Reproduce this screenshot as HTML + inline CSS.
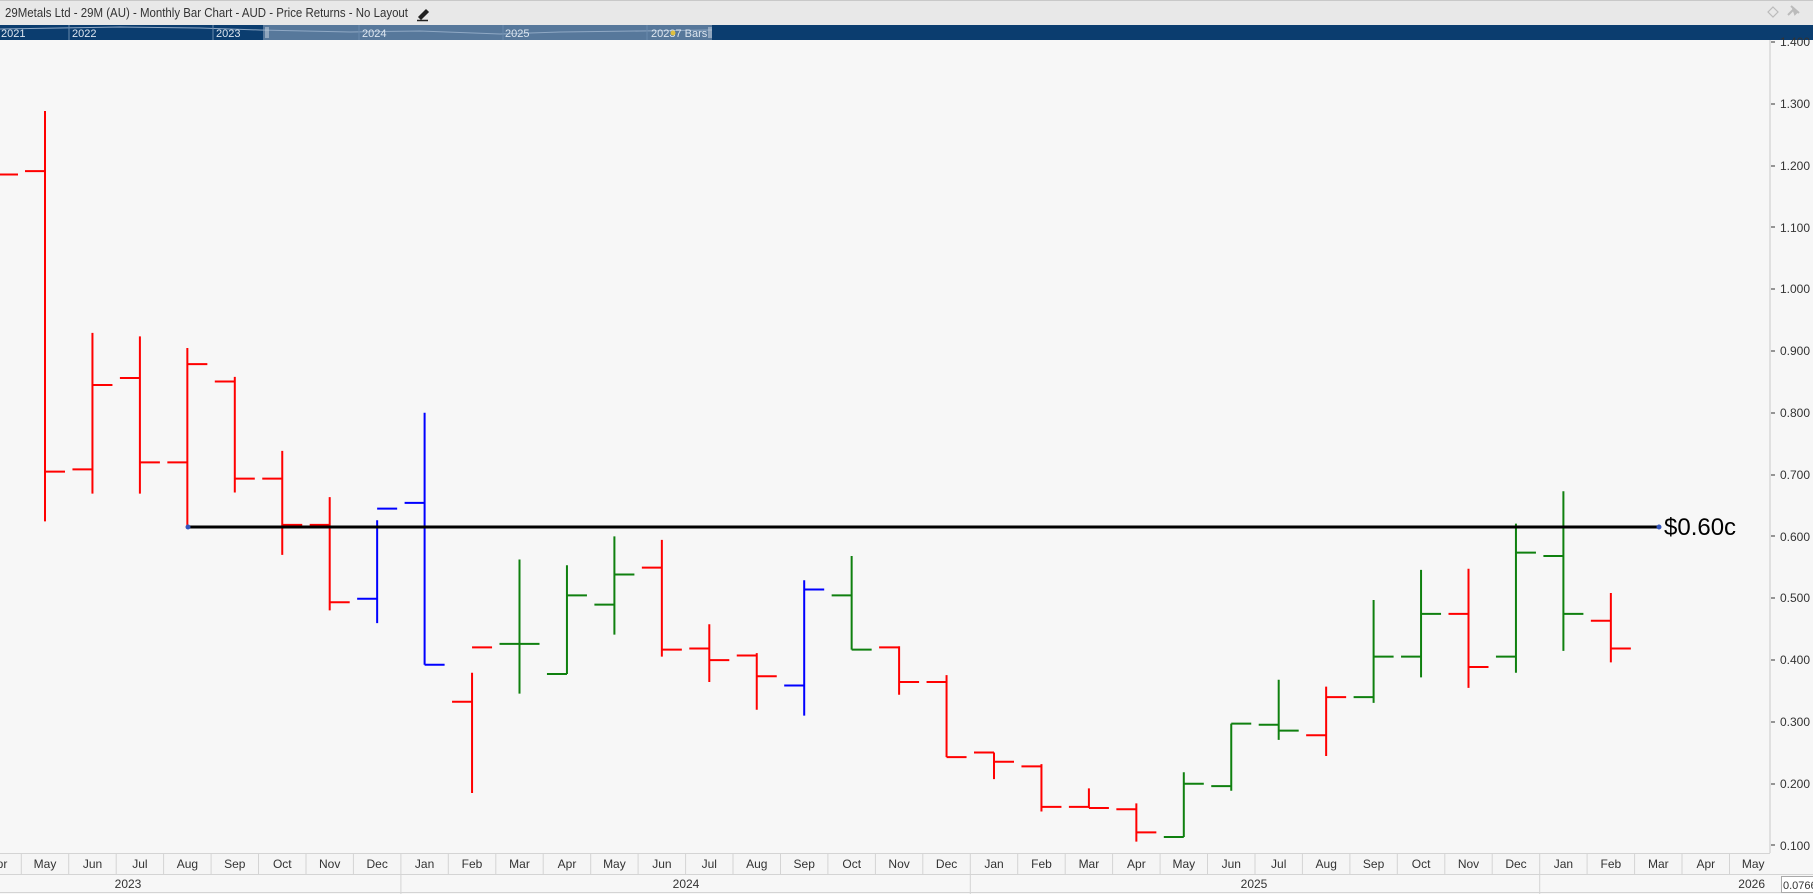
<!DOCTYPE html>
<html><head><meta charset="utf-8"><style>
html,body{margin:0;padding:0;width:1813px;height:894px;overflow:hidden;background:#f7f7f7;font-family:"Liberation Sans",sans-serif}
</style></head><body>
<svg width="1813" height="894" xmlns="http://www.w3.org/2000/svg" style="position:absolute;left:0;top:0;font-family:'Liberation Sans',sans-serif">
<rect x="0" y="0" width="1813" height="894" fill="#f7f7f7"/>
<!-- title bar -->
<rect x="0" y="0" width="1813" height="25" fill="#e8e8e8"/>
<rect x="0" y="0" width="1813" height="1" fill="#c8c8c8"/>
<text x="5" y="17" font-size="13" fill="#333" textLength="403" lengthAdjust="spacingAndGlyphs">29Metals Ltd - 29M (AU) - Monthly Bar Chart - AUD - Price Returns - No Layout</text>
<path d="M419 17 L426 10 L428 12 L421 19 Z M417 20.5 H428" stroke="#222" stroke-width="1.5" fill="#222"/>
<path d="M1773 7 L1778 12 L1773 17 L1768 12 Z" fill="none" stroke="#bbb" stroke-width="1.2"/>
<path d="M1788 15 L1793 10 M1791 6 L1799 13 M1793 8 L1797 12 L1795 14 Z" stroke="#bbb" stroke-width="2" fill="#bbb"/>
<!-- navigator -->
<rect x="0" y="25" width="1813" height="15" fill="#0b3d6f"/>
<rect x="263" y="25" width="449" height="15" fill="#57789b"/>
<path d="M0 29 L120 27 L200 28 L260 30 L350 32 L420 31 L500 34 L560 32 L640 31 L712 30" stroke="#8fa8c4" stroke-width="1" fill="none"/>
<g stroke="#6a8aac" stroke-width="1"><path d="M69 25V40M213 25V40M359 25V40M503 25V40M647 25V40"/></g>
<path d="M266 27V38M268 27V38M709 27V38M711 27V38" stroke="#c8d4e0" stroke-width="1"/>
<g font-size="11" fill="#dde6f0"><text x="1" y="37">2021</text><text x="72" y="37">2022</text><text x="216" y="37">2023</text><text x="362" y="37">2024</text><text x="505" y="37">2025</text><text x="651" y="37">20237 Bars</text></g>
<circle cx="673" cy="33" r="2.5" fill="#e0c040"/>
<!-- price axis -->
<path d="M1770 40V853" stroke="#c8c8c8"/>
<g font-size="12" fill="#333">
<text x="1780" y="46">1.400</text><text x="1780" y="108">1.300</text><text x="1780" y="170">1.200</text><text x="1780" y="232">1.100</text><text x="1780" y="293">1.000</text><text x="1780" y="355">0.900</text><text x="1780" y="417">0.800</text><text x="1780" y="479">0.700</text><text x="1780" y="541">0.600</text><text x="1780" y="602">0.500</text><text x="1780" y="664">0.400</text><text x="1780" y="726">0.300</text><text x="1780" y="788">0.200</text><text x="1780" y="850">0.100</text>
</g>
<g stroke="#333"><path d="M1771 42H1775M1771 104H1775M1771 166H1775M1771 227H1775M1771 289H1775M1771 351H1775M1771 413H1775M1771 475H1775M1771 536H1775M1771 598H1775M1771 660H1775M1771 722H1775M1771 784H1775M1771 845H1775"/></g>
<!-- time axis -->
<rect x="0" y="853" width="1770" height="21" fill="#f5f5f5"/>
<path d="M0 853.5H1770M0 874.5H1813M0 892.5H1813" stroke="#d4d4d4"/>
<g stroke="#d4d4d4"><path d="M21.3 853V874M68.7 853V874M116.2 853V874M163.6 853V874M211.1 853V874M258.5 853V874M306 853V874M353.4 853V874M400.9 853V894M448.3 853V874M495.8 853V874M543.2 853V874M590.7 853V874M638.1 853V874M685.6 853V874M733 853V874M780.5 853V874M827.9 853V874M875.4 853V874M922.8 853V874M970.3 853V894M1017.7 853V874M1065.2 853V874M1112.6 853V874M1160.1 853V874M1207.5 853V874M1255 853V874M1302.4 853V874M1349.9 853V874M1397.3 853V874M1444.8 853V874M1492.2 853V874M1539.7 853V894M1587.1 853V874M1634.6 853V874M1682 853V874M1729.5 853V874"/></g>
<g font-size="12" fill="#333" text-anchor="middle">
<text x="-2" y="868">Apr</text><text x="45" y="868">May</text><text x="92.5" y="868">Jun</text><text x="139.9" y="868">Jul</text><text x="187.4" y="868">Aug</text><text x="234.8" y="868">Sep</text><text x="282.3" y="868">Oct</text><text x="329.7" y="868">Nov</text><text x="377.2" y="868">Dec</text><text x="424.6" y="868">Jan</text><text x="472" y="868">Feb</text><text x="519.5" y="868">Mar</text><text x="567" y="868">Apr</text><text x="614.4" y="868">May</text><text x="661.9" y="868">Jun</text><text x="709.3" y="868">Jul</text><text x="756.8" y="868">Aug</text><text x="804.2" y="868">Sep</text><text x="851.7" y="868">Oct</text><text x="899.1" y="868">Nov</text><text x="946.6" y="868">Dec</text><text x="994" y="868">Jan</text><text x="1041.5" y="868">Feb</text><text x="1088.9" y="868">Mar</text><text x="1136.4" y="868">Apr</text><text x="1183.8" y="868">May</text><text x="1231.3" y="868">Jun</text><text x="1278.7" y="868">Jul</text><text x="1326.2" y="868">Aug</text><text x="1373.6" y="868">Sep</text><text x="1421.1" y="868">Oct</text><text x="1468.5" y="868">Nov</text><text x="1516" y="868">Dec</text><text x="1563.4" y="868">Jan</text><text x="1610.9" y="868">Feb</text><text x="1658.3" y="868">Mar</text><text x="1705.8" y="868">Apr</text><text x="1753.2" y="868">May</text>
<text x="128" y="888">2023</text><text x="686" y="888">2024</text><text x="1254" y="888">2025</text>
</g>
<text x="1765" y="888" font-size="12" fill="#333" text-anchor="end">2026</text>
<rect x="1781.5" y="876.5" width="40" height="16" fill="#fff" stroke="#aaa"/>
<text x="1783" y="889" font-size="11" fill="#333">0.0766</text>
<!-- bars -->
<g transform="matrix(1,0,0,1.156,0,0)" fill="none" stroke-width="2">
<g stroke="#ff0000">
<path vector-effect="non-scaling-stroke" d="M-2 151H18"/>
<path vector-effect="non-scaling-stroke" d="M45 96V451M25 148H45M45 408H65"/>
<path vector-effect="non-scaling-stroke" d="M92.45 288V427M72.45 406H92.45M92.45 333H112.45"/>
<path vector-effect="non-scaling-stroke" d="M139.9 291V427M119.9 327H139.9M139.9 400H159.9"/>
<path vector-effect="non-scaling-stroke" d="M187.35 301V456M167.35 400H187.35M187.35 315H207.35"/>
<path vector-effect="non-scaling-stroke" d="M234.8 326V426M214.8 330H234.8M234.8 414H254.8"/>
<path vector-effect="non-scaling-stroke" d="M282.25 390V480M262.25 414H282.25M282.25 454H302.25"/>
<path vector-effect="non-scaling-stroke" d="M329.7 430V528M309.7 454H329.7M329.7 521H349.7"/>
<path vector-effect="non-scaling-stroke" d="M472.05 582V686M452.05 607H472.05M472.05 560H492.05"/>
<path vector-effect="non-scaling-stroke" d="M661.85 467V568M641.85 491H661.85M661.85 562H681.85"/>
<path vector-effect="non-scaling-stroke" d="M709.3 540V590M689.3 561H709.3M709.3 571H729.3"/>
<path vector-effect="non-scaling-stroke" d="M756.75 565V614M736.75 567H756.75M756.75 585H776.75"/>
<path vector-effect="non-scaling-stroke" d="M899.1 559V601M879.1 560H899.1M899.1 590H919.1"/>
<path vector-effect="non-scaling-stroke" d="M946.55 584V655M926.55 590H946.55M946.55 655H966.55"/>
<path vector-effect="non-scaling-stroke" d="M994 651V674M974 651H994M994 659H1014"/>
<path vector-effect="non-scaling-stroke" d="M1041.45 661V702M1021.45 663H1041.45M1041.45 698H1061.45"/>
<path vector-effect="non-scaling-stroke" d="M1088.9 682V699M1068.9 698H1088.9M1088.9 699H1108.9"/>
<path vector-effect="non-scaling-stroke" d="M1136.35 695V728M1116.35 700H1136.35M1136.35 720H1156.35"/>
<path vector-effect="non-scaling-stroke" d="M1326.15 594V654M1306.15 636H1326.15M1326.15 603H1346.15"/>
<path vector-effect="non-scaling-stroke" d="M1468.5 492V595M1448.5 531H1468.5M1468.5 577H1488.5"/>
<path vector-effect="non-scaling-stroke" d="M1610.85 513V573M1590.85 537H1610.85M1610.85 561H1630.85"/>
</g>
<g stroke="#0000ff">
<path vector-effect="non-scaling-stroke" d="M377.15 450V539M357.15 518H377.15M377.15 440H397.15"/>
<path vector-effect="non-scaling-stroke" d="M424.6 357V575M404.6 435H424.6M424.6 575H444.6"/>
<path vector-effect="non-scaling-stroke" d="M804.2 502V619M784.2 593H804.2M804.2 510H824.2"/>
</g>
<g stroke="#0f800f">
<path vector-effect="non-scaling-stroke" d="M519.5 484V600M499.5 557H519.5M519.5 557H539.5"/>
<path vector-effect="non-scaling-stroke" d="M566.95 489V583M546.95 583H566.95M566.95 515H586.95"/>
<path vector-effect="non-scaling-stroke" d="M614.4 464V549M594.4 523H614.4M614.4 497H634.4"/>
<path vector-effect="non-scaling-stroke" d="M851.65 481V562M831.65 515H851.65M851.65 562H871.65"/>
<path vector-effect="non-scaling-stroke" d="M1183.8 668V724M1163.8 724H1183.8M1183.8 678H1203.8"/>
<path vector-effect="non-scaling-stroke" d="M1231.25 626V684M1211.25 680H1231.25M1231.25 626H1251.25"/>
<path vector-effect="non-scaling-stroke" d="M1278.7 588V640M1258.7 627H1278.7M1278.7 632H1298.7"/>
<path vector-effect="non-scaling-stroke" d="M1373.6 519V608M1353.6 603H1373.6M1373.6 568H1393.6"/>
<path vector-effect="non-scaling-stroke" d="M1421.05 493V586M1401.05 568H1421.05M1421.05 531H1441.05"/>
<path vector-effect="non-scaling-stroke" d="M1515.95 453V582M1495.95 568H1515.95M1515.95 478H1535.95"/>
<path vector-effect="non-scaling-stroke" d="M1563.4 425V563M1543.4 481H1563.4M1563.4 531H1583.4"/>
</g>
</g>
<!-- horizontal line -->
<path d="M188 527H1659" stroke="#000" stroke-width="3"/>
<circle cx="188" cy="527" r="2.5" fill="#3355bb"/>
<circle cx="1659" cy="527" r="2.5" fill="#3355bb"/>
<text x="1664" y="535" font-size="24" fill="#000">$0.60c</text>
</svg>
</body></html>
